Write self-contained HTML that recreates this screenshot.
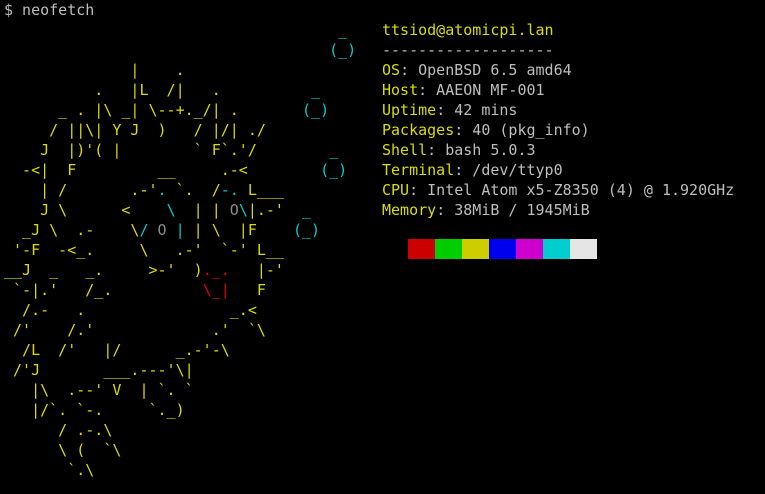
<!DOCTYPE html>
<html><head><meta charset="utf-8"><style>
html,body{margin:0;padding:0;background:#000;width:765px;height:494px;overflow:hidden}
pre{margin:0;position:absolute;font-family:"DejaVu Sans Mono","Liberation Mono",monospace;font-size:15px;line-height:20px;white-space:pre;color:#dcdc00}
.g{color:#bdbdbd}.c{color:#00cdcd}.r{color:#e00000}.o{color:#8c8c8c}.y{color:#dcdc00}
#blk{position:absolute;left:408px;top:239px;height:20px;display:flex}
#blk div{width:27px;height:20px}
</style></head><body>
<pre style="left:4px;top:0"><span class="g">$ neofetch</span>
<span class="c">                                     _</span>
<span class="c">                                    (_)</span>
              |    .
          .   |L  /|   .          <span class="c">_</span>
      _ . |\ _| \--+._/| .       <span class="c">(_)</span>
     / ||\| Y J  )   / |/| ./
    J  |)'( |        ` F`.'/        <span class="c">_</span>
  -&lt;|  F         __     .-&lt;        <span class="c">(_)</span>
    | /       .-'<span class="c">.</span> `.  /<span class="c">-.</span> L___
    J \      &lt;    <span class="c">\</span>  | | <span class="o">O</span><span class="c">\</span>|.-'  <span class="c">_</span>
  _J \  .-    \<span class="c">/</span> <span class="o">O</span> <span class="c">|</span> | \  |F    <span class="c">(_)</span>
 '-F  -&lt;_.     \   .-'  `-' L__
__J  _   _.     &gt;-'  )<span class="r">._.</span>   |-'
 `-|.'   /_.          <span class="r">\_|</span>   F
  /.-   .                _.&lt;
 /'    /.'             .'  `\
  /L  /'   |/      _.-'-\
 /'J       ___.---'\|
   |\  .--' V  | `. `
   |/`. `-.     `._)
      / .-.\
      \ (  `\
       `.\</pre>
<pre style="left:382px;top:20px">ttsiod@atomicpi.lan
<span class="g">-------------------</span>
OS<span class="g">: OpenBSD 6.5 amd64</span>
Host<span class="g">: AAEON MF-001</span>
Uptime<span class="g">: 42 mins</span>
Packages<span class="g">: 40 (pkg_info)</span>
Shell<span class="g">: bash 5.0.3</span>
Terminal<span class="g">: /dev/ttyp0</span>
CPU<span class="g">: Intel Atom x5-Z8350 (4) @ 1.920GHz</span>
Memory<span class="g">: 38MiB / 1945MiB</span></pre>
<div id="blk"><div style="background:#cd0000"></div><div style="background:#00cd00"></div><div style="background:#cdcd00"></div><div style="background:#0000ee"></div><div style="background:#cd00cd"></div><div style="background:#00cdcd"></div><div style="background:#e5e5e5"></div></div>
</body></html>
